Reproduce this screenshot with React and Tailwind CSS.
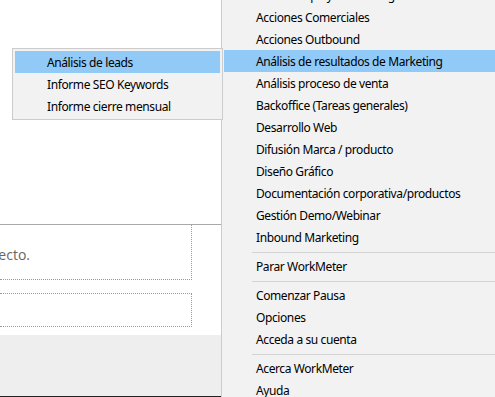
const mainItems = [
  { label: 'Acción Employer Branding' },
  { label: 'Acciones Comerciales' },
  { label: 'Acciones Outbound' },
  { label: 'Análisis de resultados de Marketing', active: true },
  { label: 'Análisis proceso de venta' },
  { label: 'Backoffice (Tareas generales)' },
  { label: 'Desarrollo Web' },
  { label: 'Difusión Marca / producto' },
  { label: 'Diseño Gráfico' },
  { label: 'Documentación corporativa/productos' },
  { label: 'Gestión Demo/Webinar' },
  { label: 'Inbound Marketing' },
  { sep: true },
  { label: 'Parar WorkMeter' },
  { sep: true },
  { label: 'Comenzar Pausa' },
  { label: 'Opciones' },
  { label: 'Acceda a su cuenta' },
  { sep: true },
  { label: 'Acerca WorkMeter' },
  { label: 'Ayuda' },
]

const subItems = [
  { label: 'Análisis de leads', active: true },
  { label: 'Informe SEO Keywords' },
  { label: 'Informe cierre mensual' },
]

function MenuRow({ item }) {
  if (item.sep) {
    return (
      <div className="h-[7px] pt-[4px] pl-[28px]">
        <div className="h-px bg-[#d4d4d4]" />
      </div>
    )
  }
  return (
    <div
      className={`h-[22px] pt-[1px] pl-[32px] leading-[21px] whitespace-nowrap text-black tracking-[-0.4px] ${
        item.active ? 'bg-[#91c9f7]' : ''
      }`}
    >
      {item.label}
    </div>
  )
}

export default function App() {
  return (
    <div className="relative w-[495px] h-[397px] overflow-hidden bg-white font-['Noto_Sans',sans-serif]">
      {/* page behind the menus */}
      <div className="w-[221px] h-full flex flex-col">
        <div className="h-[224px] shrink-0" />
        <div className="h-px shrink-0 bg-[#a9a9a9]" />
        <div className="h-[55px] shrink-0 w-[192px] border-r border-b border-dotted border-[#9a9a9a] flex items-center pt-[4px]">
          <div className="w-[30px] flex justify-end">
            <span className="whitespace-nowrap text-[14px] text-[#666] font-['Open_Sans',sans-serif]">
              Seleccione la tarea del proyecto.
            </span>
          </div>
        </div>
        <div className="h-[13px] shrink-0" />
        <div className="h-[34px] shrink-0 w-[192px] border-t border-r border-b border-dotted border-[#9a9a9a]" />
        <div className="h-[8px] shrink-0" />
        <div className="flex-1 bg-[#eeeeee]" />
        <div className="h-px shrink-0 bg-[#222]" />
      </div>

      {/* main context menu */}
      <div className="absolute left-[221px] top-[-19px] w-[300px] border border-[#cccccc] bg-[#f2f2f2] p-[2px] text-[12px]">
        {mainItems.map((item, i) => (
          <MenuRow key={i} item={item} />
        ))}
      </div>

      {/* submenu */}
      <div className="absolute left-[12px] top-[48px] w-[211px] border border-[#cccccc] bg-[#f2f2f2] p-[2px] text-[12px]">
        {subItems.map((item, i) => (
          <MenuRow key={i} item={item} />
        ))}
      </div>
    </div>
  )
}
